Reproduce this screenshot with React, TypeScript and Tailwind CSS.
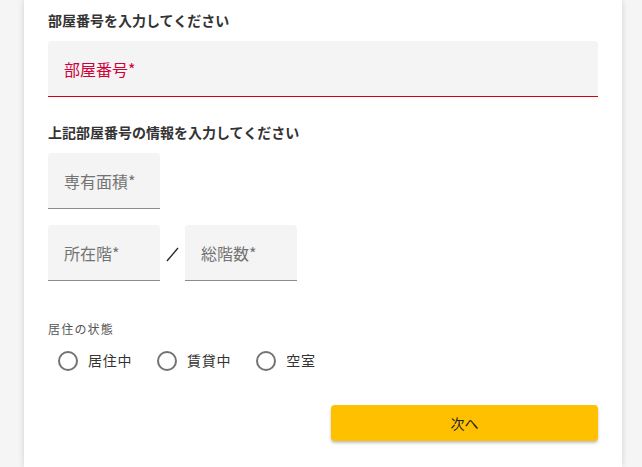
import { useState } from 'react'

const font = { fontFamily: '"Noto Sans CJK JP", "Noto Sans", sans-serif' }

function Field({ label, width, error }: { label: string; width: string; error?: boolean }) {
  return (
    <div
      className={`${width} h-[56px] bg-[#f4f4f4] rounded-t-[4px] flex items-center px-4 border-b ${
        error ? 'border-[#d0021b]' : 'border-[#8c8c8c]'
      }`}
    >
      <span className={`text-[16px] ${error ? 'text-[#d0003a]' : 'text-[#737373]'}`}>{label}</span>
    </div>
  )
}

const statuses = ['居住中', '賃貸中', '空室']

export default function App() {
  const [status, setStatus] = useState<string | null>(null)

  return (
    <div className="min-h-[467px] h-[467px] overflow-hidden bg-[#f5f5f5]" style={font}>
      <div className="ml-6 w-[598px] h-full bg-white shadow-[0_0_6px_rgba(0,0,0,0.15)] px-6 pt-[10px]">
        <h2 className="text-[14px] font-bold text-[#333] leading-[20px]">部屋番号を入力してください</h2>
        <div className="mt-[11px]">
          <Field label="部屋番号*" width="w-full" error />
        </div>

        <h2 className="mt-[25px] text-[14px] font-bold text-[#333] leading-[20px]">上記部屋番号の情報を入力してください</h2>
        <div className="mt-[11px]">
          <Field label="専有面積*" width="w-[112px]" />
        </div>
        <div className="mt-[16px] flex items-center">
          <Field label="所在階*" width="w-[112px]" />
          <svg width="25" height="20" viewBox="0 0 25 20" className="mt-[1px]">
            <line x1="7" y1="17" x2="18" y2="4" stroke="#222" strokeWidth="1.3" />
          </svg>
          <Field label="総階数*" width="w-[112px]" />
        </div>

        <div className="mt-[39px] text-[12px] text-[#555] tracking-[0.1em] leading-[18px]">居住の状態</div>
        <div className="mt-[12px] flex items-center pl-[10px]">
          {statuses.map((s) => (
            <label key={s} className="flex items-center mr-[25px] cursor-pointer" onClick={() => setStatus(s)}>
              <span className="w-[20px] h-[20px] rounded-full border-2 border-[#737373] flex items-center justify-center">
                {status === s && <span className="w-[10px] h-[10px] rounded-full bg-[#737373]" />}
              </span>
              <span className="ml-[10px] text-[14px] text-[#333] tracking-[0.05em]">{s}</span>
            </label>
          ))}
        </div>

        <div className="mt-[34px] flex justify-end">
          <button className="w-[267px] h-[36px] bg-[#ffc000] rounded-[4px] shadow-[0_2px_3px_rgba(0,0,0,0.25)] text-[14px] text-[#222]">
            次へ
          </button>
        </div>
      </div>
    </div>
  )
}
